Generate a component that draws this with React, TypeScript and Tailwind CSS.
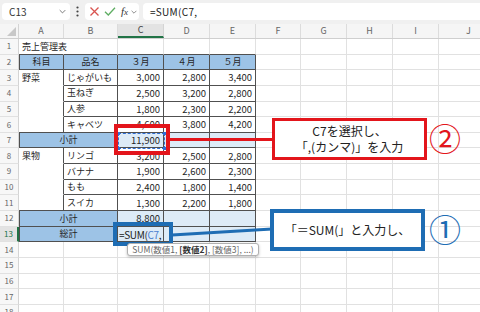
import React from "react";

const WCLS: Record<number, string> = {
  45: "w-[45px]",
  46: "w-[46px]",
  54: "w-[54px]",
  60: "w-[60px]",
  99: "w-[99px]",
};
const W = [45, 54, 46, 46, 46, 45, 46, 46, 46, 60];

const R: Record<string, string> = {
  d: "border-r border-r-[#505050]",
  g: "border-r border-r-[#e1e1e1]",
  n: "border-r border-r-transparent",
};
const B: Record<string, string> = {
  d: "border-b border-b-[#505050]",
  g: "border-b border-b-[#e1e1e1]",
  n: "border-b border-b-transparent",
};
const BG: Record<string, string> = {
  h: "bg-[#9dc3e6]",
  s: "bg-[#ddebf7]",
  w: "bg-transparent",
};
const AL: Record<string, string> = {
  l: "justify-start pl-[3px]",
  c: "justify-center",
  r: "justify-end pr-[3px]",
};

type Spec = {
  w: number;
  t?: React.ReactNode;
  a?: "l" | "c" | "r";
  bg?: "h" | "s" | "w";
  r?: "d" | "g" | "n";
  b?: "d" | "g" | "n";
  l?: boolean;
  num?: boolean;
};

function Cell({ s }: { s: Spec }) {
  return (
    <div
      className={[
        "h-full shrink-0 flex items-center whitespace-nowrap overflow-visible",
        WCLS[s.w],
        R[s.r ?? "g"],
        B[s.b ?? "g"],
        BG[s.bg ?? "w"],
        AL[s.a ?? "l"],
        s.l ? "border-l border-l-[#505050]" : "",
        s.num ? "text-[9.5px]" : "text-[9px]",
      ].join(" ")}
    >
      {s.t}
    </div>
  );
}

const plainTail = (from: number): Spec[] =>
  W.slice(from).map((w) => ({ w }));

const dataRows: Record<number, [string, string, string, string, string]> = {
  3: ["野菜", "じゃがいも", "3,000", "2,800", "3,400"],
  4: ["", "玉ねぎ", "2,500", "3,200", "2,800"],
  5: ["", "人参", "1,800", "2,300", "2,200"],
  6: ["", "キャベツ", "4,600", "3,800", "4,200"],
  8: ["果物", "リンゴ", "3,200", "2,500", "2,800"],
  9: ["", "バナナ", "1,900", "2,600", "2,300"],
  10: ["", "もも", "2,400", "1,800", "1,400"],
  11: ["", "スイカ", "1,300", "2,200", "1,800"],
};

function specsFor(n: number): Spec[] {
  if (n === 1) {
    return [
      { w: 45, t: "売上管理表", r: "n", b: "d" },
      { w: 54, b: "d" },
      { w: 46, b: "d" },
      { w: 46, b: "d" },
      { w: 46, b: "d" },
      ...plainTail(5),
    ];
  }
  if (n === 2) {
    return [
      { w: 45, t: "科目", a: "c", bg: "h", r: "d", b: "d", l: true },
      { w: 54, t: "品名", a: "c", bg: "h", r: "d", b: "d" },
      { w: 46, t: "３月", a: "c", bg: "h", r: "d", b: "d" },
      { w: 46, t: "４月", a: "c", bg: "h", r: "d", b: "d" },
      { w: 46, t: "５月", a: "c", bg: "h", r: "d", b: "d" },
      ...plainTail(5),
    ];
  }
  if (dataRows[n]) {
    const [a, b, c, d, e] = dataRows[n];
    const lastA = n === 6 || n === 11;
    return [
      { w: 45, t: a, r: "d", b: lastA ? "d" : "n" },
      { w: 54, t: b, r: "d", b: "d" },
      { w: 46, t: c, a: "r", r: "d", b: "d", num: true },
      { w: 46, t: d, a: "r", r: "d", b: "d", num: true },
      { w: 46, t: e, a: "r", r: "d", b: "d", num: true },
      ...plainTail(5),
    ];
  }
  if (n === 7 || n === 12 || n === 13) {
    const label = n === 13 ? "総計" : "小計";
    const cval: React.ReactNode =
      n === 7 ? "11,900" : n === 12 ? "8,800" : (
        <span className="-ml-[2px] text-[10px] tracking-[-0.35px] text-[#222]">
          =SUM(<span className="text-[#4a80d0]">C7</span>,
        </span>
      );
    return [
      { w: 99, t: label, a: "c", bg: "h", r: "d", b: "d", l: true },
      { w: 46, t: cval, a: n === 13 ? "l" : "r", bg: "s", r: "d", b: "d", num: true },
      { w: 46, bg: "s", r: "d", b: "d" },
      { w: 46, bg: "s", r: "d", b: "d" },
      ...plainTail(5),
    ];
  }
  return W.map((w) => ({ w }));
}

function Chevron({ cls }: { cls: string }) {
  return (
    <svg className={cls} viewBox="0 0 10 6" fill="none">
      <path d="M1 1 L5 5 L9 1" stroke="#555" strokeWidth="1.1" />
    </svg>
  );
}

function SheetRow({ n }: { n: number }) {
  const active = n === 13;
  return (
    <div className="flex h-[15.65px] shrink-0">
      <div
        className={[
          "w-[19px] h-full shrink-0 flex items-center justify-center text-[8px] border-b border-b-[#e1e1e1]",
          active
            ? "bg-[#e3e3e3] text-[#217346] border-r-2 border-r-[#217346]"
            : "bg-[#f7f7f7] text-[#666] border-r border-r-[#d4d4d4]",
        ].join(" ")}
      >
        {n}
      </div>
      {specsFor(n).map((s, i) => (
        <Cell key={i} s={s} />
      ))}
    </div>
  );
}

export default function App() {
  const cols = ["A", "B", "C", "D", "E", "F", "G", "H", "I", "J"];
  const rows = Array.from({ length: 18 }, (_, i) => i + 1);
  return (
    <div className="relative w-[480px] h-[312px] overflow-hidden bg-white text-[#262626] font-['Noto_Sans_CJK_JP','Noto_Sans',sans-serif]">
      {/* formula bar */}
      <div className="h-[24px] bg-[#f0f0f0] flex items-start pt-[3px] pl-[2px]">
        <div className="w-[68px] h-[17px] bg-white rounded-[4px] flex items-center justify-between pl-[7px] pr-[4px] text-[10px] text-[#333]">
          <span>C13</span>
          <Chevron cls="w-[7px] h-[5px]" />
        </div>
        <div className="w-[15px] h-[17px] flex items-center justify-center">
          <svg width="3" height="11" viewBox="0 0 3 11">
            <circle cx="1.5" cy="1.5" r="1.1" fill="#444" />
            <circle cx="1.5" cy="5.5" r="1.1" fill="#444" />
            <circle cx="1.5" cy="9.5" r="1.1" fill="#444" />
          </svg>
        </div>
        <div className="w-[54px] h-[17px] bg-white rounded-[4px] flex items-center pl-[4px]">
          <svg width="11" height="11" viewBox="0 0 11 11" className="shrink-0">
            <path d="M1.5 1.5 L9.5 9.5 M9.5 1.5 L1.5 9.5" stroke="#d9534f" strokeWidth="1.3" />
          </svg>
          <svg width="12" height="11" viewBox="0 0 12 11" className="ml-[4px] shrink-0">
            <path d="M1 5.8 L4.3 9 L11 1.8" stroke="#5fae63" strokeWidth="1.3" fill="none" />
          </svg>
          <span className="ml-[5px] text-[11px] leading-none italic font-['Liberation_Serif',serif] text-[#333]">
            f<span className="text-[9px]">x</span>
          </span>
          <Chevron cls="ml-[3px] w-[6px] h-[4px]" />
        </div>
        <div className="ml-[4px] flex-1 h-[17px] bg-white rounded-l-[4px] flex items-center pl-[7px] text-[10px] text-[#222] tracking-[0.3px]">
          =SUM(C7,
        </div>
      </div>

      {/* column headers */}
      <div className="flex h-[15px] bg-[#f5f5f5] border-b border-b-[#cfcfcf]">
        <div className="w-[19px] h-full shrink-0 relative border-r border-r-[#d4d4d4]">
          <svg className="absolute right-[2px] bottom-[2px]" width="9" height="9" viewBox="0 0 9 9">
            <polygon points="9,0 9,9 0,9" fill="#c8c8c8" />
          </svg>
        </div>
        {cols.map((c, i) => (
          <div
            key={c}
            className={[
              "h-full shrink-0 flex items-center justify-center text-[9px]",
              WCLS[W[i]],
              c === "C"
                ? "bg-[#e3e3e3] text-[#444] border-b-2 border-b-[#217346] border-r border-r-[#d4d4d4]"
                : "text-[#666] border-r border-r-[#dcdcdc]",
            ].join(" ")}
          >
            {c}
          </div>
        ))}
      </div>

      {/* grid */}
      <div className="flex flex-col">
        {rows.map((n) => (
          <SheetRow key={n} n={n} />
        ))}
      </div>

      {/* C7 reference marquee */}
      <div className="absolute left-[118px] top-[133px] w-[47px] h-[16px] border border-dashed border-[#2f6fd6]">
        <div className="absolute -left-[2px] -top-[2px] w-[3px] h-[3px] bg-[#2f6fd6]" />
        <div className="absolute -right-[2px] -top-[2px] w-[3px] h-[3px] bg-[#2f6fd6]" />
        <div className="absolute -left-[2px] -bottom-[2px] w-[3px] h-[3px] bg-[#2f6fd6]" />
        <div className="absolute -right-[2px] -bottom-[2px] w-[3px] h-[3px] bg-[#2f6fd6]" />
      </div>

      {/* red annotation */}
      <div className="absolute left-[114px] top-[124px] w-[56px] h-[31px] border-[4px] border-[#e3151b]" />
      <div className="absolute left-[169px] top-[138px] w-[104px] h-[3px] bg-[#e3151b]" />
      <div className="absolute left-[272px] top-[118px] w-[155px] h-[42px] border-[3px] border-[#e3151b] bg-white flex flex-col items-center justify-center text-[12px] leading-[16px] text-[#222]">
        <span>C7を選択し、</span>
        <span>「,(カンマ)」を入力</span>
      </div>
      <div className="absolute left-[429px] top-[121px] text-[32px] leading-none text-[#e3151b]">②</div>

      {/* blue annotation */}
      <div className="absolute left-[113px] top-[222px] w-[60px] h-[24px] border-[4px] border-[#1e6db4]" />
      <svg className="absolute left-0 top-0" width="480" height="312" viewBox="0 0 480 312" style={{ pointerEvents: "none" }}>
        <line x1="172" y1="235" x2="272" y2="229" stroke="#1e6db4" strokeWidth="3" />
      </svg>
      <div className="absolute left-[270px] top-[209px] w-[155px] h-[42px] border-[4px] border-[#1e6db4] bg-white flex items-center justify-center text-[12px] text-[#222]">
        「＝SUM(」と入力し、
      </div>
      <div className="absolute left-[429px] top-[212px] text-[32px] leading-none text-[#1e6db4]">①</div>

      {/* function tooltip */}
      <div className="absolute left-[127px] top-[243px] h-[13px] w-[132px] flex items-center justify-center bg-white border border-[#b0b0b0] rounded-[3px] shadow-[0_1px_3px_rgba(0,0,0,0.25)] text-[8.5px] text-[#666] whitespace-nowrap">
        <span>
          SUM(数値1, <b className="text-[#333]">[数値2]</b>, [数値3], ...)
        </span>
      </div>
    </div>
  );
}
